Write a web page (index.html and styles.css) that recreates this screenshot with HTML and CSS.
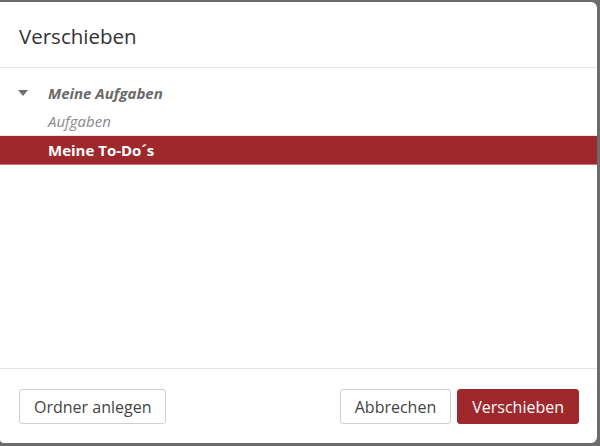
FILE: index.html
```html
<!DOCTYPE html>
<html lang="de">
<head>
<meta charset="utf-8">
<title>Verschieben</title>
<link rel="stylesheet" href="styles.css">
</head>
<body>
<div class="dialog">
  <div class="dialog-header">
    <h1 class="dialog-title">Verschieben</h1>
  </div>
  <div class="dialog-body">
    <ul class="tree">
      <li class="tree-row tree-parent">
        <span class="caret"></span>
        <span class="label">Meine Aufgaben</span>
      </li>
      <li class="tree-row tree-child">
        <span class="label">Aufgaben</span>
      </li>
      <li class="tree-row tree-child selected">
        <span class="label">Meine To-Do´s</span>
      </li>
    </ul>
  </div>
  <div class="dialog-footer">
    <button class="btn">Ordner anlegen</button>
    <div class="footer-right">
      <button class="btn">Abbrechen</button>
      <button class="btn btn-primary">Verschieben</button>
    </div>
  </div>
</div>
</body>
</html>
```
FILE: styles.css
```css
html, body {
  margin: 0;
  height: 100%;
}
body {
  background: #6c6c6c;
  padding: 2px 3px 3px 0;
  box-sizing: border-box;
  font-family: "Open Sans", "Noto Sans", sans-serif;
}
.dialog {
  background: #fff;
  height: 100%;
  display: flex;
  flex-direction: column;
  border-radius: 0 6px 6px 4px;
  overflow: hidden;
}
.dialog-header {
  height: 66px;
  box-sizing: border-box;
  border-bottom: 1px solid #e5e5e5;
  padding: 0 19px;
  display: flex;
  align-items: center;
}
.dialog-title {
  margin: 0;
  font-size: 20.5px;
  font-weight: 400;
  color: #333;
  position: relative;
  top: 1px;
}
.dialog-body {
  flex: 1;
  padding-top: 11px;
}
.tree {
  list-style: none;
  margin: 0;
  padding: 0;
}
.tree-row {
  height: 28px;
  display: flex;
  align-items: center;
  padding-left: 48px;
  box-sizing: border-box;
  font-size: 15px;
  position: relative;
}
.tree-parent .label {
  font-weight: 700;
  font-style: italic;
  color: #6a6a6a;
}
.caret {
  position: absolute;
  left: 18px;
  top: 11px;
  width: 0;
  height: 0;
  border-left: 5px solid transparent;
  border-right: 5px solid transparent;
  border-top: 6px solid #707070;
}
.tree-child .label {
  font-style: italic;
  color: #8a8a8a;
}
.tree-child.selected {
  background: #9e282b;
  border-top: 1px solid #e6e6e6;
  border-bottom: 1px solid #c77779;
  height: 30px;
}
.tree-child.selected .label {
  font-style: normal;
  font-weight: 700;
  color: #fff;
}
.dialog-footer {
  height: 75px;
  box-sizing: border-box;
  border-top: 1px solid #e5e5e5;
  padding: 20px 18px 0 19px;
  display: flex;
  justify-content: space-between;
  align-items: flex-start;
}
.footer-right {
  display: flex;
  gap: 6px;
}
.btn {
  height: 35px;
  box-sizing: border-box;
  padding: 0 14px;
  border: 1px solid #cfcfcf;
  border-radius: 3px;
  background: #fff;
  color: #444;
  font-family: "Open Sans", "Noto Sans", sans-serif;
  font-size: 16px;
}
.btn-primary {
  background: #9e282b;
  border-color: #9e282b;
  color: #fff;
}
```
